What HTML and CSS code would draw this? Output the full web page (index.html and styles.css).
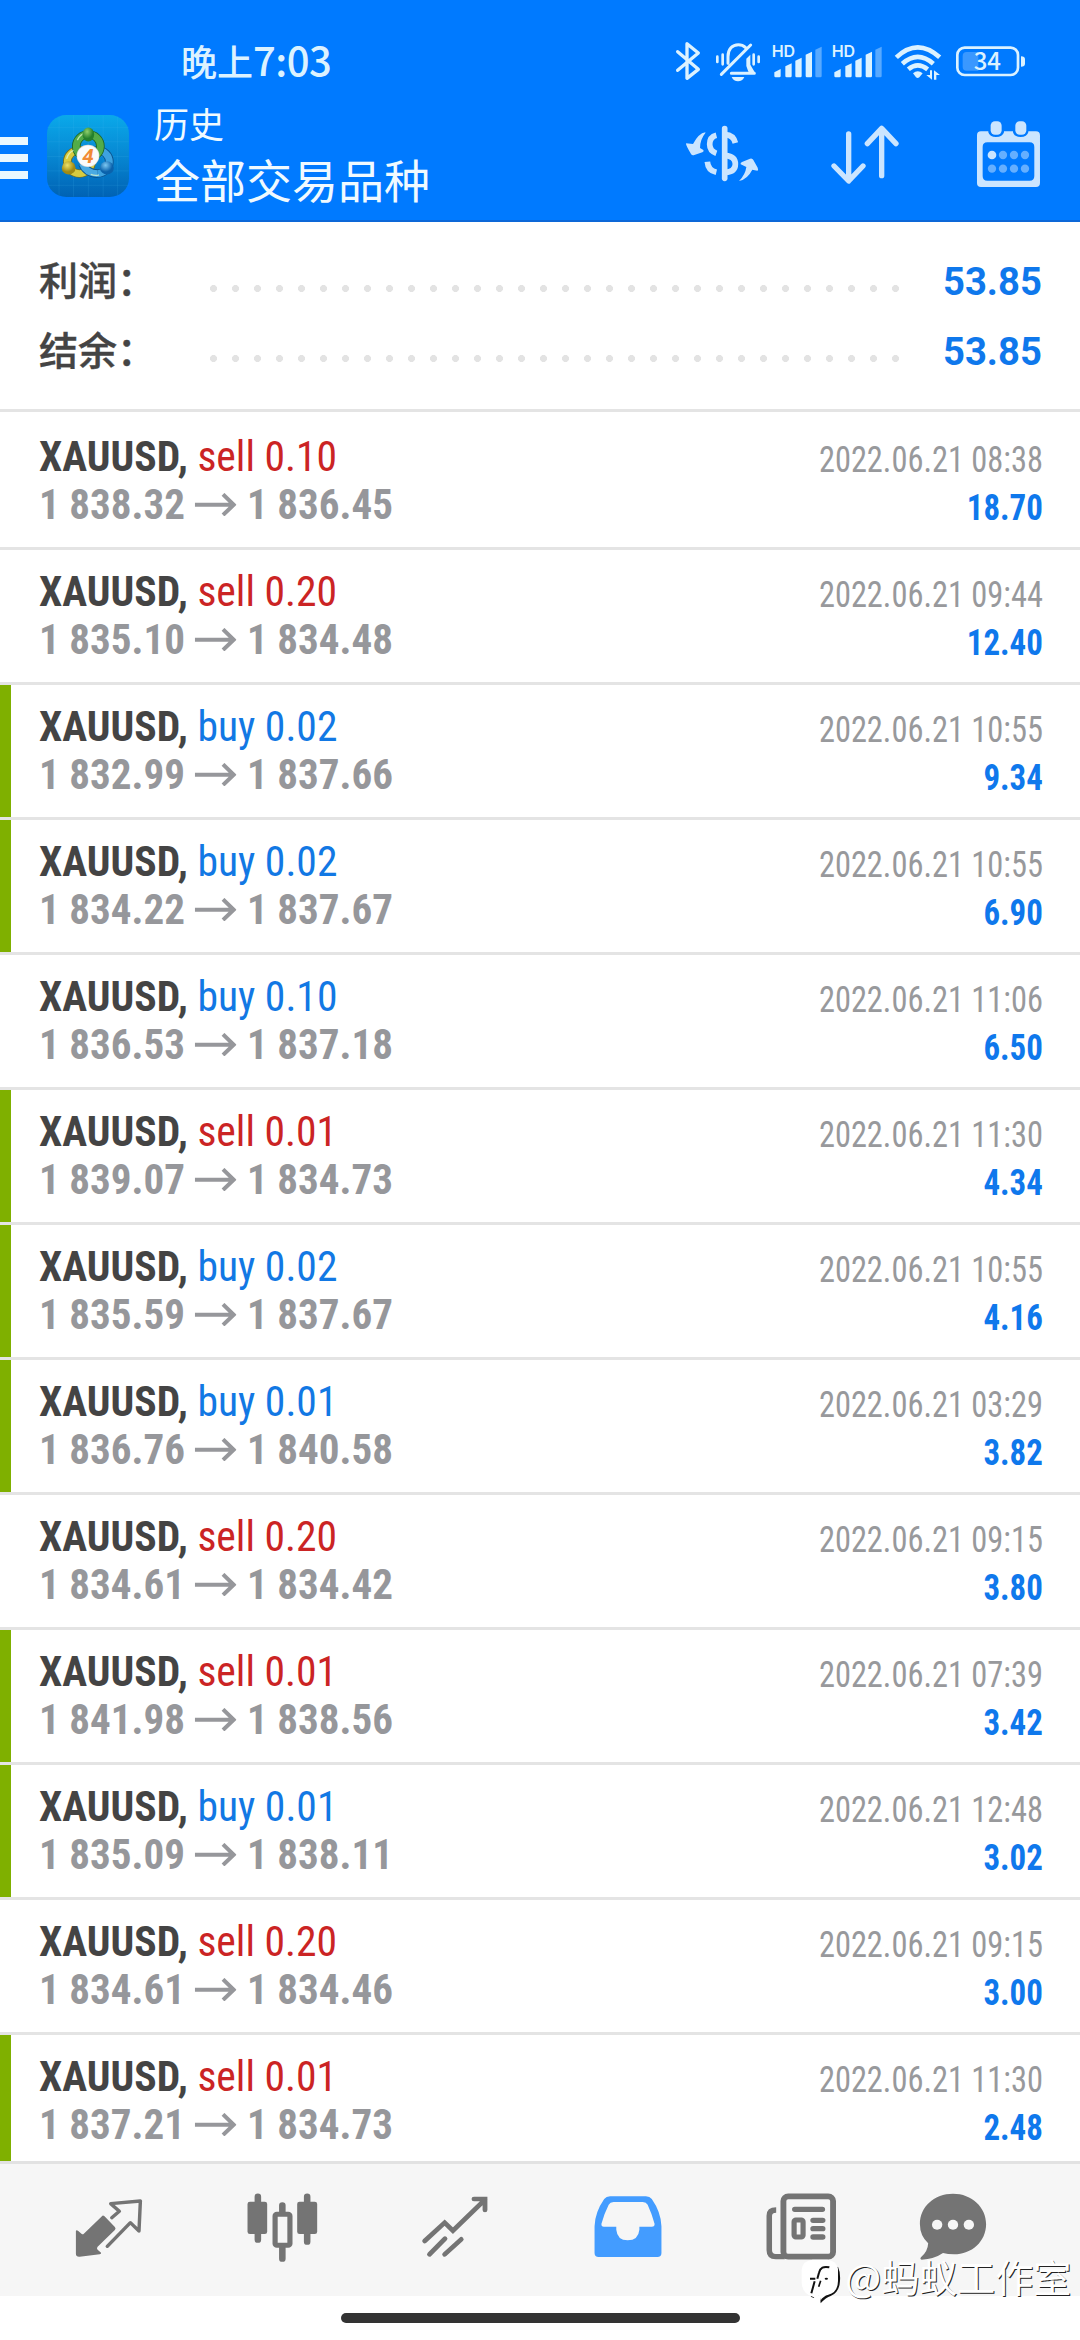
FILE: index.html
```html
<!DOCTYPE html>
<html lang="zh-CN">
<head>
<meta charset="utf-8">
<title>历史</title>
<link rel="stylesheet" href="styles.css">
</head>
<body>
<header class="header">
  <div class="status">
    <div class="clock">晚上<span class="clock-num">7:03</span></div>
    <svg class="status-icons" viewBox="90 110 1080 150">
      <g fill="none" stroke="#dcf2ff" stroke-linecap="round" stroke-linejoin="round">
        <path stroke-width="10" d="M110 157L172 210L138 237V133L172 161L110 213"/>
        <path stroke-width="9" d="M261 192V172C261 149 274 136 292 136C301 136 308 139 313 144M340 222H271M329 137L241 225"/>
        <path stroke-width="8" d="M229 172V188M245 166V195M338 166V195M353 172V188"/>
        <rect x="949" y="145" width="182" height="82" rx="22" stroke-width="8"/>
      </g>
      <path d="M328 166L316 178V200L322 217L343 222L328 196Z" fill="#dcf2ff"/>
      <path d="M272 233H310Q304 246 291 246T272 233Z" fill="#dcf2ff"/>
      <g id="signal">
        <text x="392" y="174" class="hd">HD</text>
        <path fill="#dcf2ff" d="M400 230V219L419 209V230Q419 234 415 234H404Q400 234 400 230ZM433 230V201L452 192V230Q452 234 448 234H437Q433 234 433 230ZM463 230V184L482 175V230Q482 234 478 234H467Q463 234 463 230ZM494 230V166L513 157V230Q513 234 509 234H498Q494 234 494 230Z"/>
        <path fill="#58a9ff" d="M523 230V151L542 142V230Q542 234 538 234H527Q523 234 523 230Z"/>
      </g>
      <use href="#signal" x="180"/>
      <g fill="none" stroke="#dcf2ff" stroke-width="14">
        <path d="M766 174Q830 114 896 174"/>
        <path d="M784 193Q830 152 877 193"/>
        <path d="M802 210Q830 186 860 210"/>
      </g>
      <path fill="#dcf2ff" d="M816 222Q830 209 845 222L835 234Q830 238 825 234ZM867 213H873V241L856 227H867ZM879 241V213L897 227H886V241Z"/>
      <path fill="#3a98ff" d="M977 158H1012V214H977Q965 214 965 202V170Q965 158 977 158Z"/>
      <path fill="#dcf2ff" d="M1140 171Q1152 171 1152 180V193Q1152 202 1140 202Z"/>
      <text x="998" y="213" class="battery-num">34</text>
    </svg>
  </div>
  <div class="appbar">
    <div class="burger"><i></i><i></i><i></i></div>
    <svg class="logo" viewBox="137 345 238 245" preserveAspectRatio="none">
      <defs>
        <linearGradient id="bg" x1="0" y1="0" x2="0" y2="1"><stop offset="0" stop-color="#0aa9ea"/><stop offset=".5" stop-color="#0787d2"/><stop offset="1" stop-color="#0062b4"/></linearGradient>
        <radialGradient id="gr" cx=".4" cy=".3"><stop offset="0" stop-color="#8fd06c"/><stop offset="1" stop-color="#24802c"/></radialGradient>
        <radialGradient id="ye" cx=".4" cy=".3"><stop offset="0" stop-color="#ece26b"/><stop offset="1" stop-color="#a08a13"/></radialGradient>
        <radialGradient id="bl" cx=".4" cy=".3"><stop offset="0" stop-color="#7cc8f2"/><stop offset="1" stop-color="#0a62ac"/></radialGradient>
      </defs>
      <rect x="137" y="345" width="238" height="245" rx="56" fill="url(#bg)"/>
      <path d="M172 350V585M214 346V589M257 346V589M300 346V589M342 350V585M138 382H374M138 425H374M138 469H374M138 512H374M138 555H374" stroke="#4dbcf0" stroke-opacity=".22" stroke-width="2"/>
      <g fill="none">
        <circle cx="283" cy="485" r="35" stroke="#0b548f" stroke-width="25"/><circle cx="283" cy="485" r="35" stroke="#3ea2df" stroke-width="20"/>
        <circle cx="231" cy="485" r="35" stroke="#77701c" stroke-width="25"/><circle cx="231" cy="485" r="35" stroke="#d8cb3f" stroke-width="20"/>
        <circle cx="257" cy="438" r="35" stroke="#1d6426" stroke-width="25"/><circle cx="257" cy="438" r="35" stroke="#52ac48" stroke-width="20"/>
        <path d="M240 490Q250 518 283 520" stroke="#0b548f" stroke-width="25"/><path d="M240 490Q250 518 283 520" stroke="#4aaae2" stroke-width="20"/>
        <path d="M225 420Q233 403 247 400M194 476Q199 458 214 451M264 522Q276 528 288 524" stroke="#e4f7c9" stroke-opacity=".75" stroke-width="4"/>
      </g>
      <ellipse cx="257" cy="403" rx="17" ry="21" fill="url(#gr)"/>
      <circle cx="200" cy="503" r="20" fill="url(#ye)"/>
      <circle cx="311" cy="503" r="20" fill="url(#bl)"/>
      <circle cx="256" cy="467" r="33" fill="#ddd"/><circle cx="256" cy="467" r="31" fill="#fbfbfb"/>
      <text x="256" y="489" class="logo-num">4</text>
    </svg>
    <div class="titles"><div class="title-small">历史</div><div class="title-big">全部交易品种</div></div>
    <svg class="actions" viewBox="120 350 1110 230" fill="none" stroke="#cbe5ff" stroke-linecap="round" stroke-linejoin="round">
      <path stroke-width="17" d="M254 388V537"/>
      <path stroke-width="17" stroke-linecap="butt" d="M229 408Q209 413 209 435Q209 455 229 462M202 487Q204 513 229 519M256 406Q280 407 286 431M256 468Q286 471 286 494Q286 518 256 519"/>
      <path fill="#cbe5ff" stroke="none" d="M196 399Q176 402 159 434L138 432Q137 438 153 464Q156 469 163 467L187 459Q193 456 190 452L180 446Q180 421 196 401ZM297 545Q322 540 337 511L352 514Q356 513 353 505L340 482Q337 476 330 478L306 488Q300 491 302 495L319 503Q316 526 297 545Z"/>
      <path stroke-width="16" d="M626 404V542M582 500L626 545L669 500M725 529V390M682 433L725 387L768 433"/>
      <path fill="#cbe5ff" stroke="none" fill-rule="evenodd" d="M1023 396H1045V399Q1049 413 1068 413Q1088 413 1092 399V396H1119V399Q1123 413 1142 413Q1161 413 1165 399V396H1188Q1200 396 1200 408V551Q1200 563 1188 563H1023Q1011 563 1011 551V408Q1011 396 1023 396ZM1042 429Q1028 429 1028 443V530Q1028 544 1042 544H1169Q1183 544 1183 530V443Q1183 429 1169 429Z"/>
      <rect x="1052" y="366" width="33" height="40" rx="13" fill="#cbe5ff" stroke="none"/>
      <rect x="1126" y="366" width="33" height="40" rx="13" fill="#cbe5ff" stroke="none"/>
      <g fill="#65afff" stroke="none"><circle cx="1056" cy="467" r="13" fill="#cbe5ff"/><circle cx="1089" cy="467" r="12.5"/><circle cx="1122" cy="467" r="12.5"/><circle cx="1155" cy="467" r="12.5"/><circle cx="1056" cy="508" r="12.5"/><circle cx="1089" cy="508" r="12.5"/><circle cx="1122" cy="508" r="12.5"/><circle cx="1155" cy="508" r="12.5"/></g>
    </svg>
  </div>
</header>

<section class="summary">
  <div class="sum-row"><span class="sum-label">利润：</span><span class="dots"></span><b class="sum-value">53.85</b></div>
  <div class="sum-row"><span class="sum-label">结余：</span><span class="dots"></span><b class="sum-value">53.85</b></div>
</section>

<svg class="defs"><symbol id="arrow" viewBox="0 0 126 68" preserveAspectRatio="none"><path d="M0 35H116M85 4L117 35L85 65" fill="none" stroke="#96979b" stroke-width="12"/></symbol></svg>

<main class="list">
  <article class="row"><div class="deal"><b>XAUUSD,</b> <span class="sell">sell 0.10</span></div><time>2022.06.21 08:38</time><div class="prices"><span>1 838.32</span><svg><use href="#arrow"/></svg><span>1 836.45</span></div><div class="profit">18.70</div></article>
  <article class="row"><div class="deal"><b>XAUUSD,</b> <span class="sell">sell 0.20</span></div><time>2022.06.21 09:44</time><div class="prices"><span>1 835.10</span><svg><use href="#arrow"/></svg><span>1 834.48</span></div><div class="profit">12.40</div></article>
  <article class="row tp"><div class="deal"><b>XAUUSD,</b> <span class="buy">buy 0.02</span></div><time>2022.06.21 10:55</time><div class="prices"><span>1 832.99</span><svg><use href="#arrow"/></svg><span>1 837.66</span></div><div class="profit">9.34</div></article>
  <article class="row tp"><div class="deal"><b>XAUUSD,</b> <span class="buy">buy 0.02</span></div><time>2022.06.21 10:55</time><div class="prices"><span>1 834.22</span><svg><use href="#arrow"/></svg><span>1 837.67</span></div><div class="profit">6.90</div></article>
  <article class="row"><div class="deal"><b>XAUUSD,</b> <span class="buy">buy 0.10</span></div><time>2022.06.21 11:06</time><div class="prices"><span>1 836.53</span><svg><use href="#arrow"/></svg><span>1 837.18</span></div><div class="profit">6.50</div></article>
  <article class="row tp"><div class="deal"><b>XAUUSD,</b> <span class="sell">sell 0.01</span></div><time>2022.06.21 11:30</time><div class="prices"><span>1 839.07</span><svg><use href="#arrow"/></svg><span>1 834.73</span></div><div class="profit">4.34</div></article>
  <article class="row tp"><div class="deal"><b>XAUUSD,</b> <span class="buy">buy 0.02</span></div><time>2022.06.21 10:55</time><div class="prices"><span>1 835.59</span><svg><use href="#arrow"/></svg><span>1 837.67</span></div><div class="profit">4.16</div></article>
  <article class="row tp"><div class="deal"><b>XAUUSD,</b> <span class="buy">buy 0.01</span></div><time>2022.06.21 03:29</time><div class="prices"><span>1 836.76</span><svg><use href="#arrow"/></svg><span>1 840.58</span></div><div class="profit">3.82</div></article>
  <article class="row"><div class="deal"><b>XAUUSD,</b> <span class="sell">sell 0.20</span></div><time>2022.06.21 09:15</time><div class="prices"><span>1 834.61</span><svg><use href="#arrow"/></svg><span>1 834.42</span></div><div class="profit">3.80</div></article>
  <article class="row tp"><div class="deal"><b>XAUUSD,</b> <span class="sell">sell 0.01</span></div><time>2022.06.21 07:39</time><div class="prices"><span>1 841.98</span><svg><use href="#arrow"/></svg><span>1 838.56</span></div><div class="profit">3.42</div></article>
  <article class="row tp"><div class="deal"><b>XAUUSD,</b> <span class="buy">buy 0.01</span></div><time>2022.06.21 12:48</time><div class="prices"><span>1 835.09</span><svg><use href="#arrow"/></svg><span>1 838.11</span></div><div class="profit">3.02</div></article>
  <article class="row"><div class="deal"><b>XAUUSD,</b> <span class="sell">sell 0.20</span></div><time>2022.06.21 09:15</time><div class="prices"><span>1 834.61</span><svg><use href="#arrow"/></svg><span>1 834.46</span></div><div class="profit">3.00</div></article>
  <article class="row tp"><div class="deal"><b>XAUUSD,</b> <span class="sell">sell 0.01</span></div><time>2022.06.21 11:30</time><div class="prices"><span>1 837.21</span><svg><use href="#arrow"/></svg><span>1 834.73</span></div><div class="profit">2.48</div></article>
</main>

<nav class="tabs">
  <svg viewBox="199 514 232 232" preserveAspectRatio="none">
    <path fill="#747474" d="M296 588Q299 587 302 590L332 622Q336 627 332 631L282 681Q278 685 282 690L292 699Q293 703 288 704L230 711Q219 712 219 702V634Q220 630 225 633L236 643Q239 645 242 642Z"/>
    <path fill="none" stroke="#747474" stroke-width="10" stroke-linejoin="round" stroke-linecap="round" d="M323 594L345 575L320 552L406 544L402 634L377 609L310 680"/>
  </svg>
  <svg viewBox="699 514 232 232" preserveAspectRatio="none">
    <path stroke="#747474" stroke-width="19" stroke-linecap="round" fill="none" d="M745 531V660M888 531V666M816 557V582M816 684V717"/>
    <rect x="715" y="546" width="57" height="97" rx="7" fill="#747474"/><rect x="859" y="546" width="58" height="97" rx="7" fill="#747474"/>
    <rect x="795" y="584" width="43" height="93" rx="5" fill="#f6f6f6" stroke="#747474" stroke-width="15"/>
  </svg>
  <svg viewBox="1203 514 232 232" preserveAspectRatio="none">
    <path fill="none" stroke="#747474" stroke-width="14" stroke-linecap="round" d="M1231 664L1289 609L1313 633L1406 540M1374 538H1406V571M1245 704L1290 657M1289 704L1337 659"/>
  </svg>
  <svg viewBox="138 514 232 232" preserveAspectRatio="none">
    <path fill="#439cff" fill-rule="evenodd" d="M202 530H306Q317 530 323 538Q350 578 351 620V700Q351 712 339 712H169Q157 712 157 700V620Q158 578 185 538Q191 530 202 530ZM212 547Q202 547 198 555Q184 584 177 612Q176 621 184 621H220V630Q223 662 253 662Q284 662 287 630V621H323Q332 621 331 612Q324 584 311 555Q307 547 297 547Z"/>
  </svg>
  <svg viewBox="641 514 232 232" preserveAspectRatio="none">
    <rect x="706" y="530" width="144" height="181" rx="14" fill="none" stroke="#747474" stroke-width="17"/>
    <path fill="none" stroke="#747474" stroke-width="16" d="M685 571Q665 571 665 588V692Q665 711 684 711H710"/>
    <path fill="none" stroke="#747474" stroke-width="16" stroke-linecap="round" d="M739 569H819M792 602H820M792 627H820M792 652H820"/>
    <rect x="737" y="601" width="26" height="51" rx="5" fill="none" stroke="#747474" stroke-width="15"/>
  </svg>
  <svg viewBox="1083 514 232 232" preserveAspectRatio="none">
    <path fill="#747474" d="M1199 522C1254 522 1295 563 1295 613C1295 666 1253 704 1202 704Q1184 704 1170 700Q1145 718 1108 720Q1102 719 1106 713Q1126 696 1127 671Q1103 648 1103 613C1103 561 1145 522 1199 522Z"/>
    <g fill="#f6f6f6"><circle cx="1153" cy="615" r="15"/><circle cx="1199" cy="615" r="15"/><circle cx="1245" cy="615" r="15"/></g>
  </svg>
</nav>
<footer class="gesture"><div class="pill"></div></footer>

<div class="watermark">
  <svg viewBox="60 236 124 140">
    <path fill="#111" d="M174 262Q182 280 180 305Q178 340 152 350Q138 354 122 372L121 362L126 340L104 344L102 356L92 352Z"/>
    <path fill="#fff" d="M98 241H142Q170 244 174 268V305Q173 340 145 346Q130 350 121 364Q123 352 116 347Q108 358 98 352Q66 342 65 310V272Q68 243 98 241Z"/>
    <path fill="none" stroke="#111" stroke-width="6" d="M148 264Q122 258 117 280M90 298H106M117 280L112 298M104 306L94 342"/><ellipse cx="139" cy="298" rx="5" ry="3" fill="#111"/>
    <path fill="none" stroke="#111" stroke-width="5" d="M122 304L116 322"/>
  </svg>
  <span>@蚂蚁工作室</span>
</div>
</body>
</html>
```
FILE: styles.css
```css
* { box-sizing: border-box; }
body {
  margin: 0;
  width: 1080px;
  height: 2340px;
  overflow: hidden;
  position: relative;
  display: flex;
  flex-direction: column;
  background: #fff;
  font-family: "Roboto Condensed", Roboto, "Noto Sans CJK SC", sans-serif;
}
svg { display: block; flex: none; }
.defs { position: absolute; width: 0; height: 0; }

.header {
  height: 222px;
  flex: none;
  background: #007aff;
  border-bottom: 2px solid #0d68d8;
}
.status { height: 110px; padding: 36px 49px 0 181px; display: flex; justify-content: space-between; }
.clock { margin-top: -3px; font: 500 36px/52px "Noto Sans CJK SC", sans-serif; color: #dcf2ff; white-space: nowrap; }
.clock-num { font-size: 40px; letter-spacing: -0.5px; }
.status-icons { width: 360px; height: 50px; }
.hd { font: 600 19px Inter, sans-serif; font-size: 48px; fill: #dcf2ff; }
.battery-num { font: 500 72px "Noto Sans CJK SC", sans-serif; fill: #dcf2ff; }

.appbar { display: flex; height: 110px; }
.burger { width: 28px; margin: 27px 19px 0 0; display: flex; flex-direction: column; gap: 9px; }
.burger i { height: 8px; background: #eaf8ff; }
.logo { width: 82px; height: 82px; margin-top: 5px; }
.logo-num { font: italic 700 60px Roboto, sans-serif; fill: #f18a35; text-anchor: middle; }
.titles { margin: -6px 0 0 25px; flex: 1; color: #f0faff; font-family: "Noto Sans CJK SC", sans-serif; white-space: nowrap; }
.title-small { font-size: 35px; line-height: 38px; }
.title-big { font-size: 46px; line-height: 72px; }
.actions { width: 370px; height: 76.67px; margin: 6px 30px 0 0; }

.summary { height: 190px; flex: none; padding: 24px 38px 0 39px; border-bottom: 3px solid #e4e4e4; }
.sum-row { display: flex; align-items: center; height: 70px; }
.sum-label { width: 171px; margin-top: -6px; font: 500 39px/70px "Noto Sans CJK SC", sans-serif; color: #444; -webkit-text-stroke: .4px #444; }
.dots {
  width: 704px;
  height: 7px;
  margin-top: 15px;
  background: radial-gradient(circle at 3.5px 3.5px, #e3e3e3 3.2px, transparent 3.8px) 0 0 / 22px 7px;
}
.sum-value { margin: 2px 0 0 auto; font: 700 39px/70px Roboto, sans-serif; color: #0f78ec; transform: scaleX(.98); transform-origin: 100% 0; }

.list { flex: none; height: 1749px; padding-top: 3px; overflow: hidden; }
.row {
  height: 135px;
  border-bottom: 3px solid #e4e4e4;
  padding: 17px 37px 0 39px;
  display: grid;
  grid-template-columns: 1fr auto;
  grid-template-rows: 48px 48px;
  line-height: 48px;
  white-space: nowrap;
}
.tp { background: linear-gradient(#7fb000, #7fb000) 0 0 / 11px 132px no-repeat; }
.deal { font-size: 43px; color: #444; transform: scaleX(.967); transform-origin: 0 0; }
.sell { color: #cb2424; }
.buy { color: #1278e4; }
.prices { display: flex; font-size: 43px; font-weight: 700; color: #96979b; transform: scaleX(.955); transform-origin: 0 0; }
.prices svg { width: 44px; height: 23px; margin: 13px 10.5px 0; }
time, .profit { padding-top: 4px; font-size: 36px; text-align: right; transform: scaleX(.9); transform-origin: 100% 0; }
time { color: #98999c; }
.profit { font-weight: 700; color: #0f78ec; transform: scaleX(.915); }

.tabs {
  height: 135px;
  flex: none;
  border-top: 3px solid #e2e2e2;
  background: #f6f6f6;
  display: grid;
  grid-template-columns: repeat(5, 173px) 132px;
  padding-left: 22px;
  align-items: center;
  justify-items: center;
}
.tabs svg { width: 80px; height: 77.33px; }
.gesture { height: 44px; display: flex; justify-content: center; padding-top: 17px; }
.pill { width: 399px; height: 10px; border-radius: 5px; background: #333; }

.watermark { position: absolute; left: 800px; top: 2254px; display: flex; }
.watermark svg { width: 41.33px; height: 46.67px; margin-top: 4px; }
.watermark span { margin-left: 4px; font: 400 38px/44px "Noto Sans CJK SC", sans-serif; color: #fff; text-shadow: 1px 1px 0 #222; white-space: nowrap; }
```
